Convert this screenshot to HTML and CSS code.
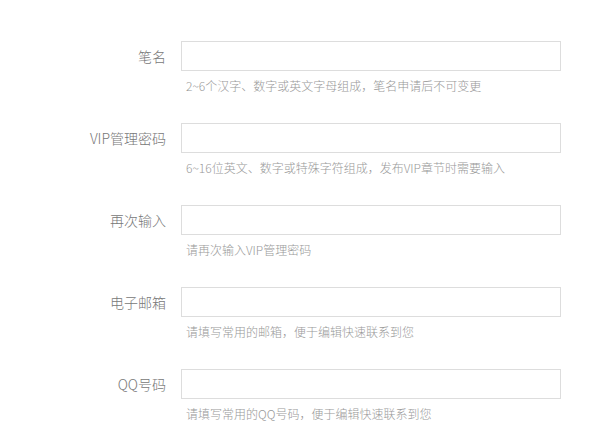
FILE: index.html
```html
<!DOCTYPE html>
<html lang="zh-CN">
<head>
    <meta charset="UTF-8">
    <meta name="viewport" content="width=device-width, initial-scale=1.0">
    <title>注册</title>
    <link rel="stylesheet" href="styles.css">
</head>
<body>
    <form class="reg-form">
        <div class="row">
            <label class="label">笔名</label>
            <div class="field">
                <input class="input" type="text">
                <p class="hint">2~6个汉字、数字或英文字母组成，笔名申请后不可变更</p>
            </div>
        </div>
        <div class="row">
            <label class="label">VIP管理密码</label>
            <div class="field">
                <input class="input" type="password">
                <p class="hint">6~16位英文、数字或特殊字符组成，发布VIP章节时需要输入</p>
            </div>
        </div>
        <div class="row">
            <label class="label">再次输入</label>
            <div class="field">
                <input class="input" type="password">
                <p class="hint">请再次输入VIP管理密码</p>
            </div>
        </div>
        <div class="row">
            <label class="label">电子邮箱</label>
            <div class="field">
                <input class="input" type="text">
                <p class="hint">请填写常用的邮箱，便于编辑快速联系到您</p>
            </div>
        </div>
        <div class="row">
            <label class="label">QQ号码</label>
            <div class="field">
                <input class="input" type="text">
                <p class="hint">请填写常用的QQ号码，便于编辑快速联系到您</p>
            </div>
        </div>
    </form>
</body>
</html>
```

FILE: styles.css
```css
body { margin: 0; background: #fff; font-family: "Noto Sans CJK SC", "Microsoft YaHei", sans-serif; color: #777; }
.reg-form { padding: 41px 0 0 46px; }
.row { display: flex; align-items: flex-start; height: 82px; }
.label { width: 120px; padding-right: 15px; text-align: right; font-size: 14px; font-weight: 300; line-height: 30px; color: #777; }
.field { display: flex; flex-direction: column; }
.input { box-sizing: border-box; width: 380px; height: 30px; margin: 0; padding: 0 8px; border: 1px solid #ddd; outline: none; background: #fff; }
.hint { margin: 6px 0 0 5px; font-size: 12px; font-weight: 300; line-height: 18px; color: #999; }
```
